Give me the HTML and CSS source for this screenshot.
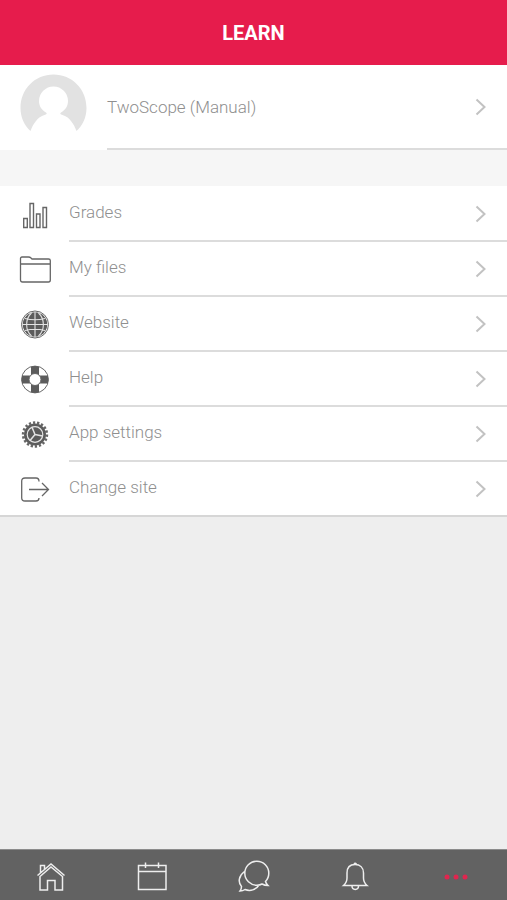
FILE: index.html
```
<!DOCTYPE html>
<html lang="en">

<head>
    <meta charset="UTF-8">
    <meta name="viewport" content="width=device-width, initial-scale=1.0">
    <title>Learn</title>
    <link rel="stylesheet" href="styles.css">
</head>

<body>
    <header class="header">
        <h1 class="heading">LEARN</h1>
    </header>

    <main class="content">
        <!-- User profile -->
        <a class="profile" href="#">
            <svg class="avatar" viewBox="0 0 67 58" aria-hidden="true">
                <path fill="#e2e2e2" d="M10.500 57C4 51 .5 43 .5 34C.5 15 15 .5 33.500 .5S66.500 15 66.500 34C66.500 43 63 51 56.500 57C54 50 49.500 43 42.500 41C40.500 40.500 39.500 39.500 41 38.500C45.500 36 48 32 48 27A14.500 14.500 0 0 0 19 27C19 32 21.500 36 26 38.500C27.500 39.500 26.500 40.500 24.500 41C17.500 43 13 50 10.500 57Z" />
            </svg>
            <span class="profile-body">
                <span>TwoScope (Manual)</span>
                <svg class="arrow" viewBox="0 0 12 18" aria-hidden="true"><path d="M1.500 1.500L9.500 9L1.500 16.500" /></svg>
            </span>
        </a>

        <!-- Menu -->
        <ul class="menu">
            <li>
                <a class="item" href="#">
                    <svg class="icon" viewBox="0 0 32 32" aria-hidden="true">
                        <path stroke-width="1.400" d="M4.700 20.500H8.300V29.500H4.700ZM11 5.500H14.500V29.500H11ZM17.500 16H21V29.500H17.500ZM24 9.500H27.500V29.500H24Z" />
                    </svg>
                    <span class="item-body">
                        <span class="label">Grades</span>
                        <svg class="arrow" viewBox="0 0 12 18" aria-hidden="true"><path d="M1.500 1.500L9.500 9L1.500 16.500" /></svg>
                    </span>
                </a>
            </li>
            <li>
                <a class="item" href="#">
                    <svg class="icon" viewBox="0 0 32 32" aria-hidden="true">
                        <path stroke-width="1.300" d="M1.500 12V5.500Q1.500 4 3 4H9.500Q11 4 12 5L13 6H29.500Q31.300 6 31.300 7.500V27Q31.300 29 29.500 29H3.500Q1.500 29 1.500 27ZM1.500 11H31.300" />
                    </svg>
                    <span class="item-body">
                        <span class="label">My files</span>
                        <svg class="arrow" viewBox="0 0 12 18" aria-hidden="true"><path d="M1.500 1.500L9.500 9L1.500 16.500" /></svg>
                    </span>
                </a>
            </li>
            <li>
                <a class="item" href="#">
                    <svg class="icon" viewBox="0 0 32 32" aria-hidden="true">
                        <circle cx="16" cy="16.500" r="13.500" />
                        <circle class="dark" cx="16" cy="16.500" r="12.200" />
                        <path class="light" stroke-width="1.100" d="M16 4V29M4 16.500H28M6 10.500Q16 13 26 10.500M6 22.500Q16 20 26 22.500M12.500 5C6 11 6 22 12.500 28M19.500 5C26 11 26 22 19.500 28" />
                    </svg>
                    <span class="item-body">
                        <span class="label">Website</span>
                        <svg class="arrow" viewBox="0 0 12 18" aria-hidden="true"><path d="M1.500 1.500L9.500 9L1.500 16.500" /></svg>
                    </span>
                </a>
            </li>
            <li>
                <a class="item" href="#">
                    <svg class="icon" viewBox="0 0 32 32" aria-hidden="true">
                        <circle cx="16" cy="16.500" r="13.400" />
                        <path class="dark" d="M12 3.700Q16 2.500 20 3.700V12.500H28.800Q30 16.500 28.800 20.500H20V29.300Q16 30.500 12 29.300V20.500H3.200Q2 16.500 3.200 12.500H12Z" />
                        <circle class="hole" cx="16" cy="16.500" r="6" />
                    </svg>
                    <span class="item-body">
                        <span class="label">Help</span>
                        <svg class="arrow" viewBox="0 0 12 18" aria-hidden="true"><path d="M1.500 1.500L9.500 9L1.500 16.500" /></svg>
                    </span>
                </a>
            </li>
            <li>
                <a class="item" href="#">
                    <svg class="icon" viewBox="0 0 32 32" aria-hidden="true">
                        <circle class="dark" cx="16" cy="16.500" r="11" />
                        <circle cx="16" cy="16.500" r="11.800" stroke-width="2.800" pathLength="72" stroke-dasharray="2.200 1.800" />
                        <circle class="light" cx="16" cy="16.500" r="7.800" stroke-width="1.200" />
                        <path class="light" stroke-width="1.500" d="M16 16.500L13 9.300M16 16.500L23.500 18M16 16.500L11 22.500" />
                    </svg>
                    <span class="item-body">
                        <span class="label">App settings</span>
                        <svg class="arrow" viewBox="0 0 12 18" aria-hidden="true"><path d="M1.500 1.500L9.500 9L1.500 16.500" /></svg>
                    </span>
                </a>
            </li>
            <li>
                <a class="item" href="#">
                    <svg class="icon" viewBox="0 0 32 32" aria-hidden="true">
                        <path stroke-width="1.300" d="M20 8.500Q20 5 17 5H6Q2.700 5 2.700 8V25Q2.700 28 6 28H17Q20 28 20 25M10 16.500H29.500M23 10L29.500 16.500L23 23" />
                    </svg>
                    <span class="item-body">
                        <span class="label">Change site</span>
                        <svg class="arrow" viewBox="0 0 12 18" aria-hidden="true"><path d="M1.500 1.500L9.500 9L1.500 16.500" /></svg>
                    </span>
                </a>
            </li>
        </ul>
    </main>

    <!-- Bottom tabs -->
    <nav class="tabs">
        <a class="tab" href="#" aria-label="Home">
            <svg viewBox="0 0 32 32"><path d="M2.500 15.500L16 4L29.500 15.500M5 16.500V30H12.500V20.500H20V30H27.500V16.500L16 7ZM5.500 12.500V5.500H9.500V9" /></svg>
        </a>
        <a class="tab" href="#" aria-label="Calendar">
            <svg viewBox="0 0 32 32"><path d="M2.500 5.500H30V29.500H2.500ZM2.500 11.500H30M9.500 2.500V8M22.500 2.500V8" /></svg>
        </a>
        <a class="tab" href="#" aria-label="Messages">
            <svg viewBox="0 0 32 32"><path d="M27.500 21.500C29.500 19.500 30.800 16.500 30.800 13.300A12 12 0 1 0 19 25.200Q22 25.200 24 24Q26.500 25.500 30 25.500Q28 23.500 27.500 21.500ZM6.500 11.500C1 15.500 -.5 22 3.500 26.500Q3.500 29 2 31Q5 31 7 29.500C12 31.500 18 30 21 25" /></svg>
        </a>
        <a class="tab" href="#" aria-label="Notifications">
            <svg viewBox="0 0 32 32"><path d="M4.500 25.500Q8 22.500 8 18V13C8 7.500 11 4.500 16 4.500S24.500 7.500 24.500 13V18Q24.500 22.500 28 25.500ZM13 26C13 30.500 19.500 30.500 19.500 26M15 4Q16 2.500 17.500 4" /></svg>
        </a>
        <a class="tab active" href="#" aria-label="More">
            <svg viewBox="0 0 32 32"><circle cx="7" cy="17" r="2.500" /><circle cx="16" cy="17" r="2.500" /><circle cx="25" cy="17" r="2.500" /></svg>
        </a>
    </nav>
</body>

</html>
```
FILE: styles.css
```
* {
    margin: 0;
    padding: 0;
    box-sizing: border-box;
}

body {
    display: flex;
    flex-direction: column;
    min-height: 100vh;
    background-color: #eee;
    color: #8f8f8f;
    font-family: Roboto, sans-serif;
    font-size: 17px;
    font-weight: 300;
    line-height: 24px;
}

a {
    color: inherit;
    text-decoration: none;
}

/* Header */
.header {
    padding: 21px 20px 20px;
    background-color: #e61c4c;
    color: white;
    text-align: center;
}

.heading {
    font-size: 20px;
    font-weight: 700;
    line-height: 24px;
}

.content {
    flex: 1;
}

/* Profile row */
.profile {
    display: flex;
    gap: 20px;
    height: 85px;
    padding-left: 20px;
    background-color: white;
}

.avatar {
    width: 67px;
    height: 58px;
    margin-top: 9px;
}

.profile-body,
.item-body {
    flex: 1;
    display: flex;
    align-items: center;
    justify-content: space-between;
    padding-right: 20px;
    border-bottom: 2px solid #dcdcdc;
}

.arrow {
    width: 12px;
    height: 18px;
    fill: none;
    stroke: #c2c2c2;
    stroke-width: 2;
}

/* Menu list */
.menu {
    padding-top: 1px;
    list-style: none;
    border-top: 36px solid #f6f6f6;
    background-color: white;
}

.item {
    display: flex;
    align-items: center;
    gap: 18px;
    height: 55px;
    padding-left: 19px;
}

.item-body {
    height: 100%;
}

.label {
    padding-bottom: 3px;
}

/* Last line runs the full width */
.menu li:last-child .item {
    border-bottom: 2px solid #d6d6d6;
}

.menu li:last-child .item-body {
    border-bottom: none;
}

.icon {
    width: 32px;
    height: 32px;
    margin-bottom: 2px;
    fill: none;
    stroke: #666;
}

.menu li:last-child .icon {
    margin-bottom: 0;
}

.dark {
    fill: #5c5c5c;
    stroke: none;
}

.light {
    stroke: #e4e4e4;
}

.hole {
    fill: white;
}

/* Bottom tabs */
.tabs {
    display: flex;
    height: 51px;
    background-color: #626262;
    border-top: 1px solid #8c8c8c;
}

.tab {
    flex: 1;
    display: flex;
    align-items: center;
    justify-content: center;
}

.tab svg {
    width: 32px;
    height: 32px;
    margin-top: 1px;
    fill: none;
    stroke: #eee;
    stroke-width: 1.5;
}

.tab.active svg {
    fill: #e0264f;
    stroke: none;
}
```
